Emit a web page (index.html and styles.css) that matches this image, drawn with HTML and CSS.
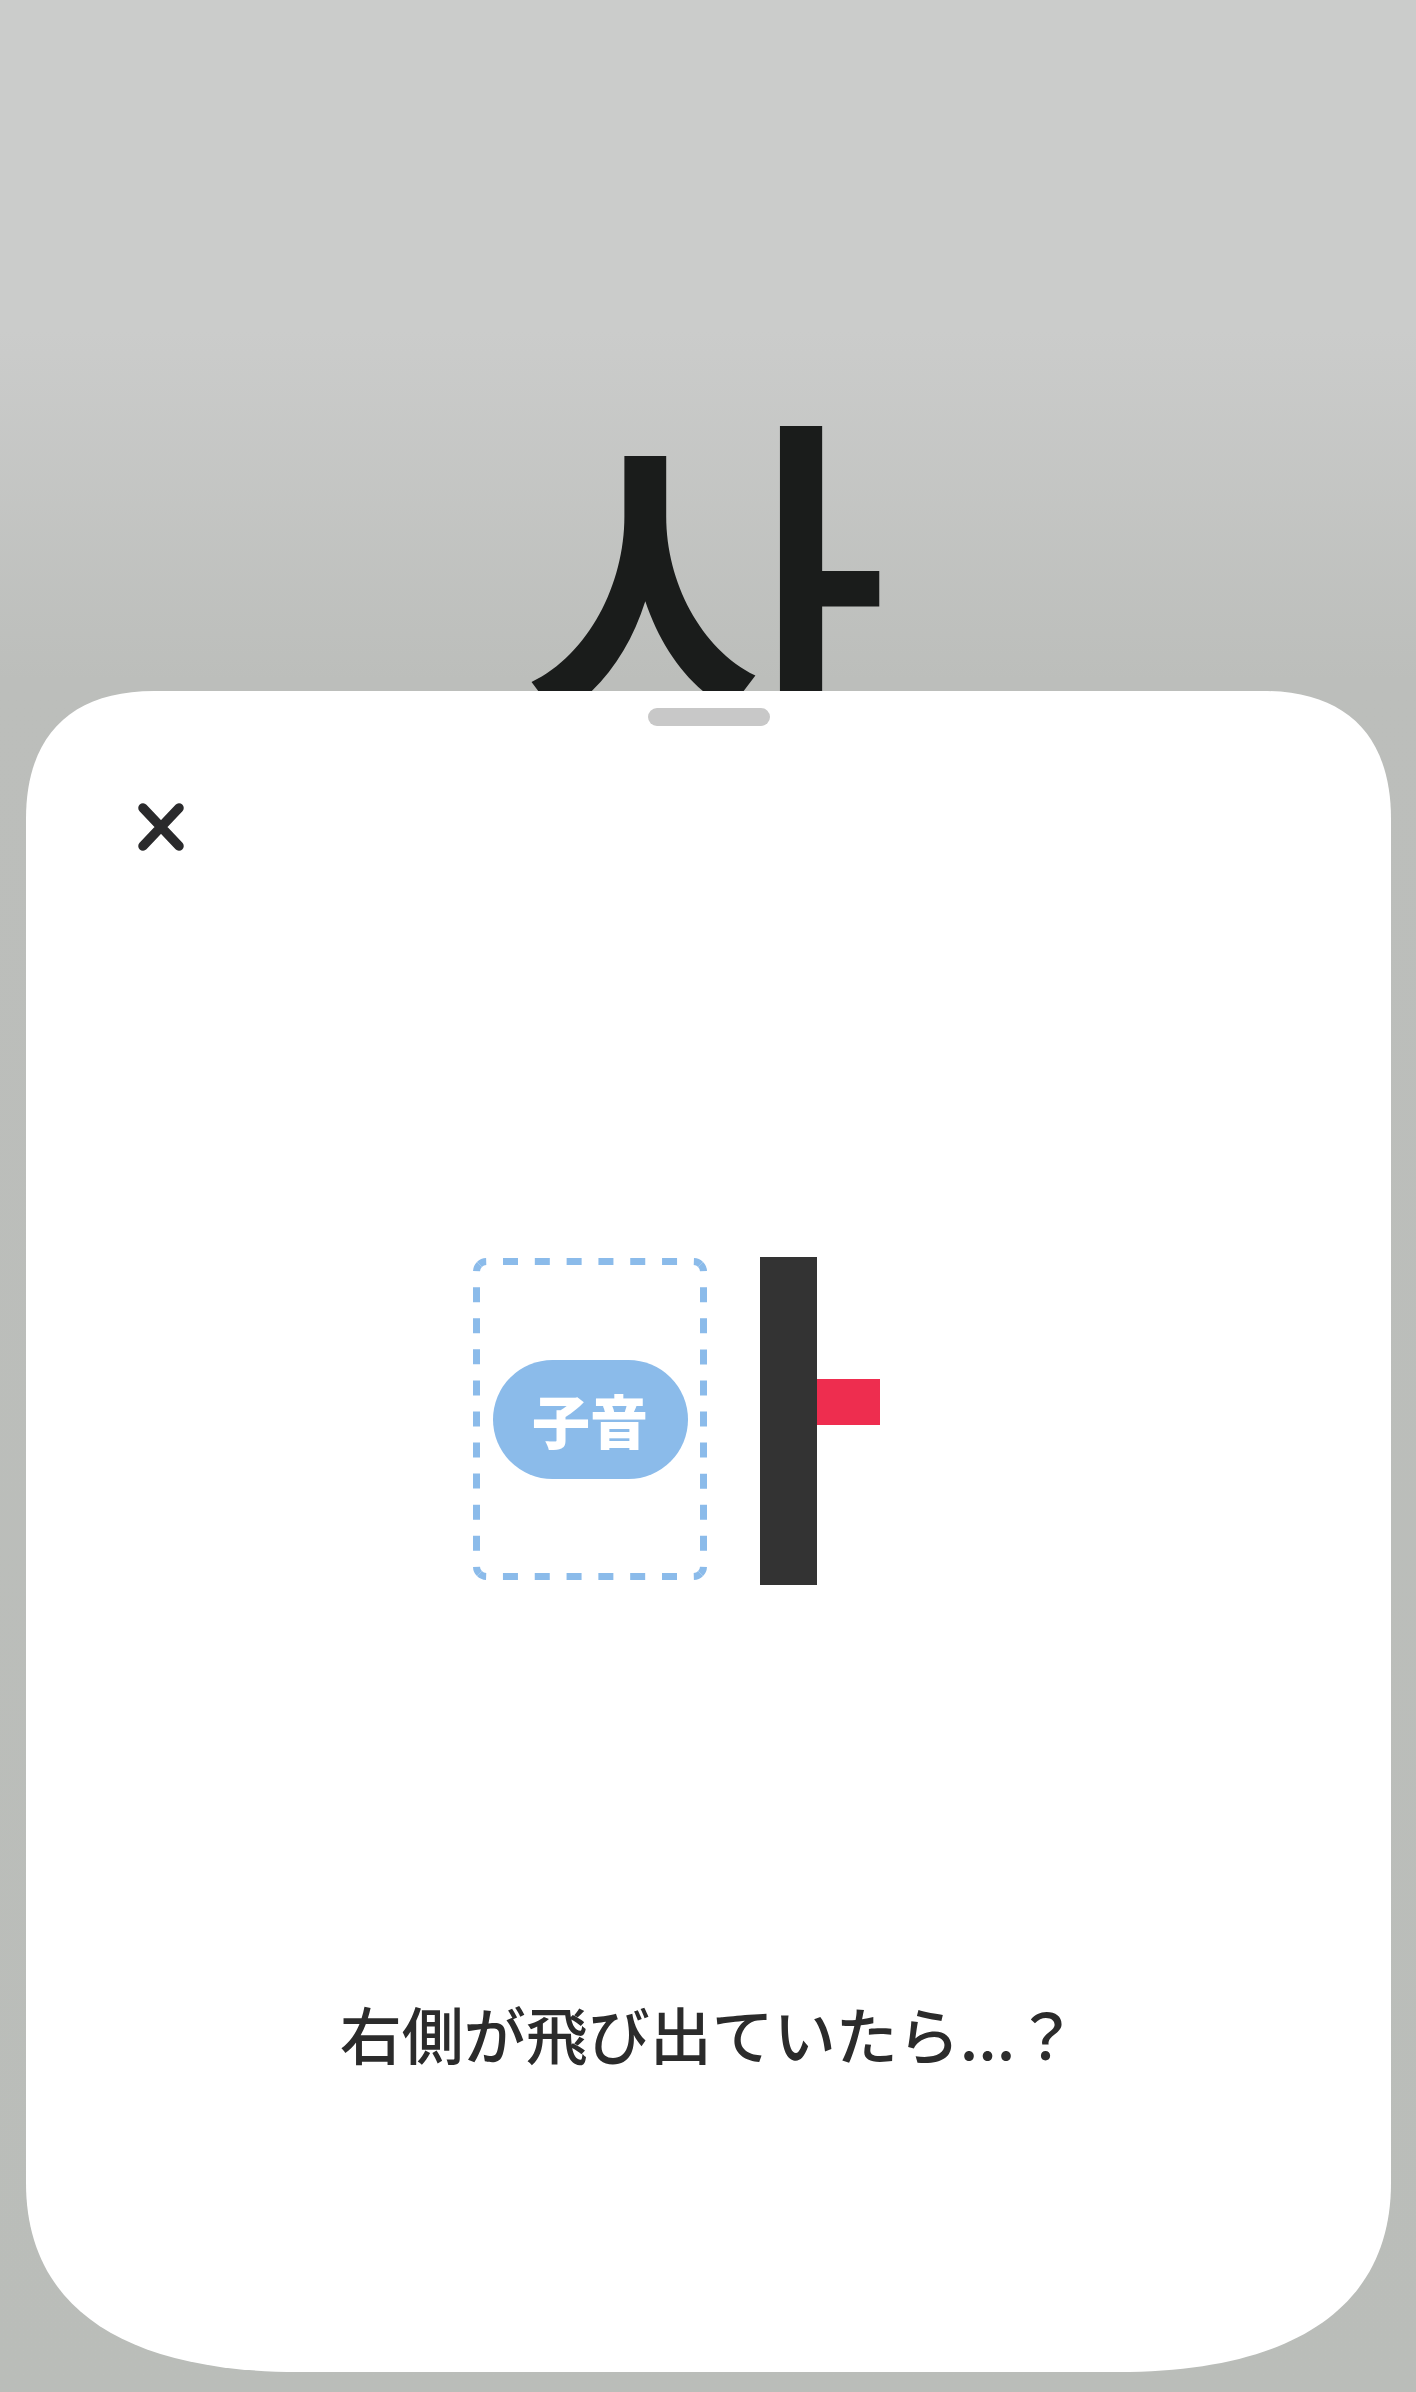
FILE: index.html
```html
<!DOCTYPE html>
<html lang="ja">
<head>
<meta charset="utf-8">
<title>사</title>
<link rel="stylesheet" href="styles.css">
</head>
<body>
<div class="screen">
  <div class="hero">
    <div class="hero-glyph" lang="ko">사</div>
  </div>
  <div class="sheet">
    <div class="handle"></div>
    <button class="close" aria-label="閉じる">
      <svg width="46" height="48" viewBox="0 0 46 48">
        <path d="M5 5 L41 43 M41 5 L5 43" stroke="#2a2a2c" stroke-width="9.5" stroke-linecap="round" fill="none"/>
      </svg>
    </button>
    <div class="diagram">
      <div class="slot">
        <svg class="slot-frame" width="234" height="322" viewBox="0 0 234 322">
          <g fill="none" stroke="#8bbbea" stroke-width="7" stroke-linecap="butt">
            <path d="M6.43 6.43 A10 10 0 0 1 13.5 3.5 H220.5 A10 10 0 0 1 227.57 6.43" stroke-dasharray="15 16.81" stroke-dashoffset="7.5"/>
            <path d="M227.57 6.43 A10 10 0 0 1 230.5 13.5 V308.5 A10 10 0 0 1 227.57 315.57" stroke-dasharray="15 16.07" stroke-dashoffset="7.5"/>
            <path d="M227.57 315.57 A10 10 0 0 1 220.5 318.5 H13.5 A10 10 0 0 1 6.43 315.57" stroke-dasharray="15 16.81" stroke-dashoffset="7.5"/>
            <path d="M6.43 315.57 A10 10 0 0 1 3.5 308.5 V13.5 A10 10 0 0 1 6.43 6.43" stroke-dasharray="15 16.07" stroke-dashoffset="7.5"/>
          </g>
        </svg>
        <div class="pill">子音</div>
      </div>
      <div class="vowel">
        <div class="vowel-stem"></div>
        <div class="vowel-tick"></div>
      </div>
    </div>
    <p class="caption">右側が飛び出ていたら...？</p>
  </div>
</div>
</body>
</html>
```

FILE: styles.css
```css
html, body {
  margin: 0;
  padding: 0;
}

body {
  background: #babdb9;
}

.screen {
  width: 1416px;
  height: 2392px;
  overflow: hidden;
  background: linear-gradient(to bottom, #cbcccb 0px, #cbcccb 330px, #bcbebb 680px, #babdb9 2392px);
}

.hero {
  height: 691px;
  overflow: hidden;
  display: flex;
  justify-content: center;
}

.hero-glyph {
  padding: 384px 8px 0 0;
  font-family: "Noto Sans CJK KR", "Noto Sans CJK JP", sans-serif;
  font-weight: 500;
  font-size: 402px;
  line-height: 1;
  color: #1a1c1b;
}

.sheet {
  margin: 0 25px 0 26px;
  height: 1681px;
  background: #ffffff;
  clip-path: path("M0,128 C0,44.8 44.8,0 128,0 H1237 C1320.2,0 1365,44.8 1365,128 V1492 C1365,1614.85 1269.45,1681 1092,1681 H273 C95.55,1681 0,1614.85 0,1492 Z");
  display: flex;
  flex-direction: column;
  align-items: flex-start;
}

.handle {
  align-self: center;
  margin-top: 17px;
  width: 122px;
  height: 18px;
  border-radius: 9px;
  background: #c8c8c8;
}

.close {
  margin: 77px 0 0 112px;
  padding: 0;
  border: 0;
  background: none;
  width: 46px;
  height: 48px;
  display: block;
}

.close svg {
  display: block;
}

.diagram {
  margin: 406px 0 0 447px;
  display: flex;
  align-items: flex-start;
}

.slot {
  width: 234px;
  height: 322px;
  margin-top: 1px;
  display: flex;
  align-items: center;
  justify-content: center;
  position: relative;
}

.slot-frame {
  position: absolute;
  left: 0;
  top: 0;
}

.pill {
  width: 195px;
  height: 119px;
  border-radius: 60px;
  background: #8bbbea;
  color: #ffffff;
  font-family: "Noto Sans CJK JP", sans-serif;
  font-weight: 900;
  font-size: 58px;
  line-height: 1;
  display: flex;
  align-items: center;
  justify-content: center;
}

.vowel {
  margin-left: 53px;
  display: flex;
  align-items: flex-start;
}

.vowel-stem {
  width: 57px;
  height: 328px;
  background: #333333;
}

.vowel-tick {
  margin-top: 122px;
  width: 63px;
  height: 46px;
  background: #ee2d4f;
}

.caption {
  align-self: stretch;
  margin: 417px 0 0 0;
  text-align: center;
  font-family: "Noto Sans CJK JP", sans-serif;
  font-weight: 500;
  font-size: 62px;
  line-height: 1;
  color: #2b2b2b;
}
```
